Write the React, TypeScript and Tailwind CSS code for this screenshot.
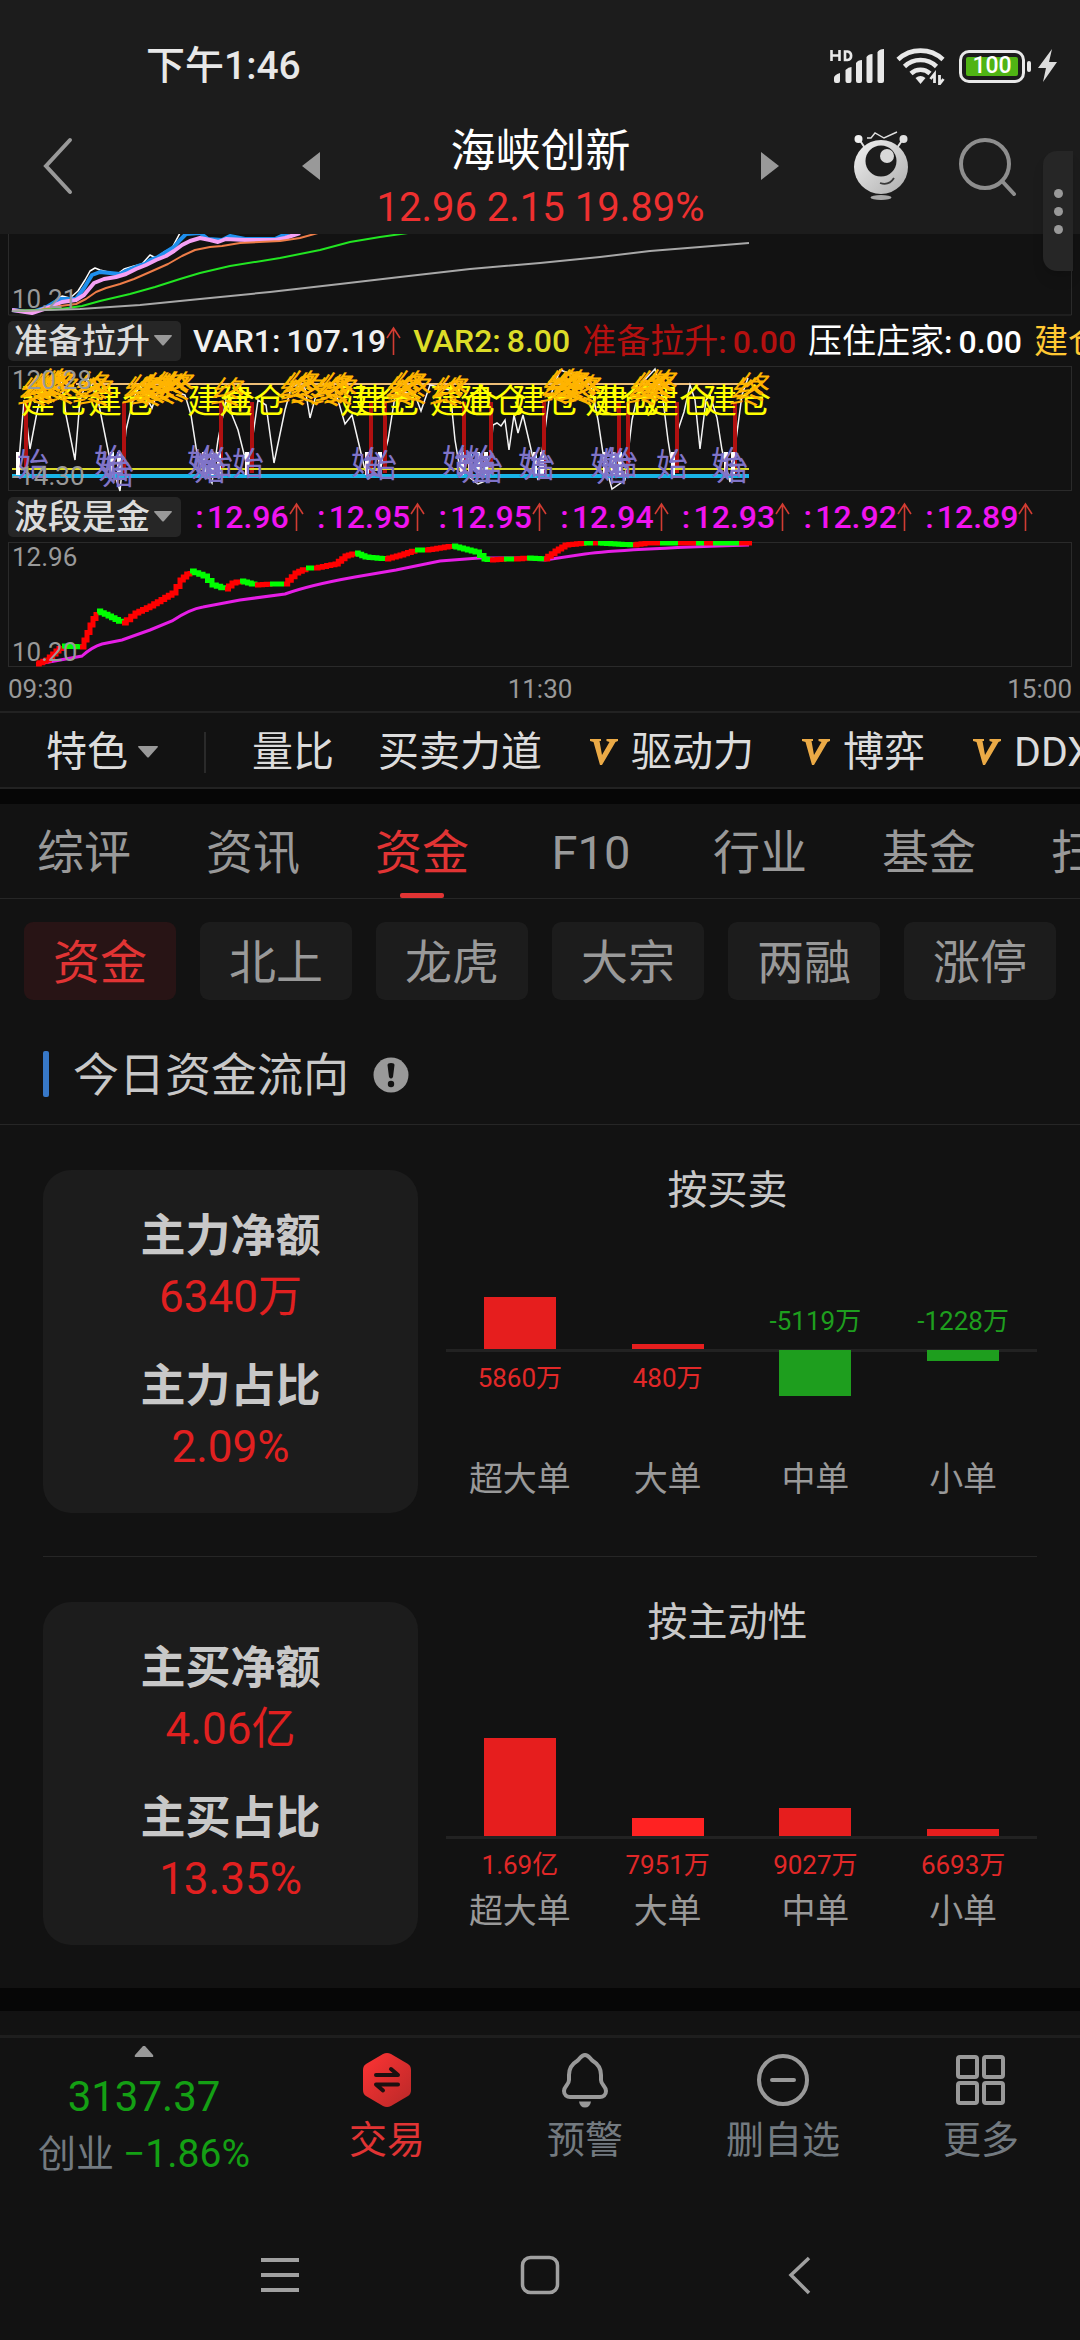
import { useState } from 'react'
import type { ReactNode } from 'react'

type Point = [number, number]

interface Bar {
  name: string
  value: string
  height: number
  negative?: boolean
  bright?: boolean
}

interface FlowPanel {
  title: string
  amountLabel: string
  amount: string
  ratioLabel: string
  ratio: string
  // room above the axis depends on whether the panel has outflows
  tall?: boolean
  bars: Bar[]
}

const TABS = ['综评', '资讯', '资金', 'F10', '行业', '基金', '扫雷']
const SUB_TABS = ['资金', '北上', '龙虎', '大宗', '两融', '涨停']
const WAVE = ['12.96', '12.95', '12.95', '12.94', '12.93', '12.92', '12.89']

const PANELS: FlowPanel[] = [
  {
    title: '按买卖',
    amountLabel: '主力净额',
    amount: '6340万',
    ratioLabel: '主力占比',
    ratio: '2.09%',
    bars: [
      { name: '超大单', value: '5860万', height: 52 },
      { name: '大单', value: '480万', height: 5 },
      { name: '中单', value: '-5119万', height: 46, negative: true },
      { name: '小单', value: '-1228万', height: 11, negative: true },
    ],
  },
  {
    title: '按主动性',
    amountLabel: '主买净额',
    amount: '4.06亿',
    ratioLabel: '主买占比',
    ratio: '13.35%',
    tall: true,
    bars: [
      { name: '超大单', value: '1.69亿', height: 98 },
      { name: '大单', value: '7951万', height: 18, bright: true },
      { name: '中单', value: '9027万', height: 28 },
      { name: '小单', value: '6693万', height: 7 },
    ],
  },
]

function StatusBar() {
  return (
    <div className="flex h-[92px] items-center justify-between pt-[40px] pr-[22px] pl-[146px]">
      <span className="text-[39px] leading-[52px] font-medium text-[#e8e8e8]">下午1:46</span>
      <div className="flex items-center">
        <svg width="56" height="36" viewBox="0 0 56 36" fill="#e8e8e8" aria-label="信号">
          <path d="M1.500 2v11M9.500 2v11M1.500 7.500h8M15 3.500v8.500h2.500a4.300 4.300 0 0 0 0-8.500z" fill="none" stroke="#e8e8e8" strokeWidth="2.600" />
          <path d="M4 30q0-3 6-5v8q0 2-2 2H6q-2 0-2-2zM15.500 22q3-3 6-3v14q0 2-2 2h-2q-2 0-2-2zM26 15q2-3 6-3v21q0 2-2 2h-2q-2 0-2-2zM36.500 9q2-3 6-3v27q0 2-2 2h-2q-2 0-2-2zM47.500 4q2-3 6.500-3v32q0 2-2 2h-2.500q-2 0-2-2z" />
        </svg>
        <svg className="ml-[10px]" width="50" height="38" viewBox="0 0 50 38" fill="none" stroke="#e8e8e8" strokeWidth="4.600" aria-label="无线网络">
          <path d="M2 12.500a33 33 0 0 1 45 0M8.500 19.500a23 23 0 0 1 32 0M15 26.500a14 14 0 0 1 19 0" />
          <path d="M19.500 31q5-4 10 0l-5 6z" fill="#e8e8e8" stroke="none" />
          <path d="M38.500 36V27l-4 5M43.500 28v9l4-5" strokeWidth="2.800" />
        </svg>
        <div className="ml-[13px] flex h-[33px] w-[66px] rounded-[10px] border-[3px] border-[#e8e8e8] p-[4px]">
          <span className="flex flex-1 items-center justify-center rounded-[2px] bg-[#50b414] text-[23px] leading-[20px] font-medium text-white">
            100
          </span>
        </div>
        <span className="ml-[2px] h-[11px] w-[4px] rounded-[2px] bg-[#e8e8e8]" />
        <svg className="ml-[7px]" width="20" height="34" viewBox="0 0 20 34" fill="#dcdcdc" aria-label="充电中">
          <path d="M14 0L0 19h8L5 33 19 13h-8z" />
        </svg>
      </div>
    </div>
  )
}

function Robot() {
  return (
    <svg width="56" height="70" viewBox="0 0 56 70" fill="none">
      <defs>
        <linearGradient id="robot" x1="0" y1="0" x2="1" y2="1">
          <stop offset="0" stopColor="#f2f2f2" />
          <stop offset="1" stopColor="#adadad" />
        </linearGradient>
      </defs>
      <path d="M6 8l6 9M50 8l-6 9" stroke="#e0e0e0" strokeWidth="2" />
      <circle cx="5.500" cy="8" r="4" fill="#f0f0f0" />
      <circle cx="50.500" cy="8" r="4" fill="#e0e0e0" />
      <path d="M14 7h4l4-5 9 5 13-6" stroke="#e0e0e0" strokeWidth="1.400" />
      <circle cx="28" cy="36" r="27" fill="url(#robot)" />
      <circle cx="28" cy="30" r="15.500" fill="#1c1c1c" />
      <circle cx="34" cy="25" r="7" fill="#d8d8d8" />
      <path d="M27 52q9 3 14-5" stroke="#3a3a3a" strokeWidth="1.800" />
      <ellipse cx="28" cy="66.500" rx="10.500" ry="2.500" fill="#a8a8a8" />
    </svg>
  )
}

function Header() {
  return (
    <header className="flex h-[142px] items-center pt-[6px] pr-[62px] pl-[36px]">
      <button aria-label="返回" className="flex-none">
        <svg width="44" height="60" viewBox="0 0 44 60" fill="none" stroke="#999" strokeWidth="4" strokeLinecap="round">
          <path d="M34 4L10 30l24 26" />
        </svg>
      </button>
      <div className="flex flex-1 items-center justify-between pr-[74px] pl-[222px]">
        <button aria-label="上一只">
          <svg width="18" height="28" viewBox="0 0 18 28" fill="#999"><path d="M18 0v28L0 14z" /></svg>
        </button>
        <div className="flex flex-col items-center pt-[28px]">
          <h1 className="text-[45px] leading-[56px] text-white">海峡创新</h1>
          <p className="text-[40px] leading-[56px] whitespace-nowrap text-[#ee3030]">12.96 2.15 19.89%</p>
        </div>
        <button aria-label="下一只">
          <svg width="18" height="28" viewBox="0 0 18 28" fill="#999"><path d="M0 0v28l18-14z" /></svg>
        </button>
      </div>
      <div className="flex flex-none items-center gap-[49px]">
        <button aria-label="智能助手"><Robot /></button>
        <button aria-label="搜索">
          <svg width="60" height="60" viewBox="0 0 60 60" fill="none" stroke="#8e8e8e" strokeWidth="4" strokeLinecap="round">
            <circle cx="27" cy="28" r="24" />
            <path d="M44 45l12 13" />
          </svg>
        </button>
      </div>
    </header>
  )
}

function line(points: Point[]) {
  return points.map((p) => p.join(',')).join(' ')
}

const AVERAGES: { color: string; width: number; points: Point[] }[] = [
  {
    color: '#ffffff',
    width: 1.5,
    points: [[12, 310], [18, 311], [32, 313], [44, 309], [56, 300], [62, 296], [70, 298], [78, 291], [85, 280], [90, 271], [95, 268], [100, 270], [108, 272], [116, 275], [124, 269], [134, 266], [142, 264], [150, 255], [156, 258], [164, 252], [172, 248], [180, 233]],
  },
  {
    color: '#1e8fee',
    width: 4,
    points: [[12, 310], [32, 312], [45, 308], [60, 299], [76, 299], [84, 288], [92, 275], [100, 272], [110, 273], [120, 274], [128, 270], [138, 266], [145, 264], [150, 260], [158, 257], [166, 252], [174, 247], [180, 240], [186, 234], [200, 233], [208, 239], [222, 240], [230, 236], [245, 239], [275, 239], [290, 232]],
  },
  {
    color: '#f5a0f5',
    width: 4,
    points: [[12, 310], [32, 313], [50, 307], [62, 302], [76, 300], [84, 295], [94, 283], [104, 279], [116, 277], [126, 274], [136, 269], [146, 265], [156, 260], [166, 256], [174, 251], [182, 245], [190, 241], [200, 238], [210, 240], [218, 242], [226, 239], [245, 240], [275, 240], [285, 238], [300, 233]],
  },
  {
    color: '#ee7d48',
    width: 2,
    points: [[12, 311], [40, 310], [60, 306], [76, 304], [86, 299], [96, 292], [106, 288], [120, 284], [134, 279], [150, 272], [168, 264], [182, 256], [195, 250], [210, 247], [222, 246], [240, 243], [280, 241], [300, 238], [318, 233]],
  },
  {
    color: '#22e622',
    width: 2,
    points: [[12, 311], [60, 309], [82, 306], [100, 301], [130, 294], [155, 287], [180, 279], [200, 273], [230, 266], [280, 258], [320, 250], [350, 242], [380, 237], [408, 233]],
  },
  {
    color: '#a8a8a8',
    width: 2,
    points: [[12, 311], [80, 309], [140, 305], [200, 299], [270, 292], [340, 284], [400, 277], [470, 269], [540, 263], [600, 257], [650, 251], [700, 247], [749, 243]],
  },
]

function AverageChart() {
  return (
    <svg className="block w-full" viewBox="8 234 1064 82" fill="none">
      <path d="M8.500 234V315H1071.500V234" stroke="#2a2a2a" />
      {AVERAGES.map((a) => (
        <polyline key={a.color} points={line(a.points)} stroke={a.color} strokeWidth={a.width} strokeLinejoin="round" />
      ))}
      <text x="12" y="308" fontSize="26" fill="#999">10.21</text>
    </svg>
  )
}

const OSCILLATOR: Point[] = [
  [18, 472], [24, 400], [30, 449], [37, 412], [44, 385], [60, 372], [66, 415], [75, 460], [80, 400], [88, 378], [98, 400], [110, 460], [120, 491],
  [126, 430], [133, 400], [140, 385], [152, 408], [160, 385], [185, 395], [191, 415], [198, 460], [212, 483], [218, 440], [226, 400], [238, 430],
  [248, 470], [258, 400], [266, 405], [274, 463], [285, 410], [292, 385], [305, 388], [310, 418], [316, 395], [335, 390], [345, 424], [352, 415],
  [365, 470], [380, 470], [388, 440], [396, 390], [415, 395], [421, 411], [430, 385], [450, 390], [455, 440], [460, 470], [478, 484], [488, 480],
  [493, 425], [497, 423], [501, 426], [505, 420], [509, 450], [514, 415], [518, 433], [523, 415], [530, 445], [538, 480], [545, 430], [549, 400],
  [560, 370], [590, 380], [598, 420], [604, 460], [612, 489], [625, 480], [632, 420], [640, 385], [655, 369], [663, 400], [668, 440], [673, 472],
  [678, 430], [684, 412], [690, 385], [695, 400], [700, 449], [706, 400], [710, 395], [717, 418], [722, 450], [730, 482], [736, 440], [742, 395], [748, 378],
]
const SIGNALS = [26, 124, 221, 252, 371, 385, 464, 491, 544, 619, 628, 677, 735]
const BUILD = [21, 88, 187, 219, 340, 354, 430, 459, 512, 585, 594, 645, 703]
const HATCH = [18, 112, 119, 204, 212, 219, 247, 367, 380, 462, 470, 478, 486, 535, 542, 605, 613, 620, 673, 726, 733]
const STARTS: Point[] = [
  [17, 476], [94, 472], [98, 478], [102, 484], [187, 472], [191, 476], [194, 480], [201, 474], [232, 475], [351, 474], [365, 477],
  [442, 472], [456, 475], [461, 480], [465, 472], [471, 480], [518, 474], [523, 477], [590, 474], [596, 481], [600, 475], [606, 474],
  [656, 476], [711, 474], [716, 480],
]
const ENDS: Point[] = [
  [17, 404], [22, 402], [27, 400], [32, 397], [36, 395], [40, 397], [44, 402], [72, 402], [75, 398], [79, 404],
  [121, 403], [126, 401], [131, 404], [136, 401], [141, 399], [146, 402], [150, 398], [155, 400], [160, 398],
  [210, 404], [276, 403], [280, 399], [285, 397], [290, 403], [310, 404], [314, 401], [319, 399], [323, 403],
  [383, 403], [387, 399], [392, 397], [397, 402], [429, 404], [434, 402],
  [539, 402], [543, 397], [547, 395], [551, 398], [555, 396], [559, 400], [563, 403], [567, 401],
  [626, 403], [630, 399], [635, 397], [640, 400], [643, 396], [729, 404], [735, 399],
]

function SignalChart() {
  return (
    <svg className="block w-full" viewBox="8 366 1064 126" fill="none">
      <rect x="8.500" y="366.500" width="1063" height="124" stroke="#2a2a2a" />
      <path d="M76 384H749" stroke="#edbe78" strokeWidth="2" />
      <polyline points={line(OSCILLATOR)} stroke="#f4f4f4" strokeWidth="1.500" />
      {SIGNALS.map((x) => (
        <path key={x} d={`M${x} 402V473`} stroke="#b01010" strokeWidth="4" />
      ))}
      <path d="M12 469H749" stroke="#dcdc28" strokeWidth="2" />
      <path d="M12 476H749" stroke="#18b4e6" strokeWidth="4" />
      {HATCH.map((x) => (
        <path key={x} d={`M${x} 452V475`} stroke="#fff" strokeWidth="4" />
      ))}
      <g fontSize="34" fill="#ffff00">
        {BUILD.map((x) => <text key={x} x={x} y="413">建仓</text>)}
      </g>
      <g fontSize="32" fill="#8074c8">
        {STARTS.map(([x, y]) => <text key={x} x={x} y={y}>始</text>)}
      </g>
      <g fontSize="32" fontStyle="italic" fill="#ffb400">
        {ENDS.map(([x, y]) => <text key={x} x={x} y={y}>终</text>)}
      </g>
      <g fontSize="26" fill="#999">
        <text x="12" y="389">120.28</text>
        <text x="12" y="485">-14.30</text>
      </g>
    </svg>
  )
}

// direction changes of the wave line, in time order
const WAVE_RUNS: { up: boolean; points: Point[] }[] = [
  { up: true, points: [[36, 664], [46, 660], [56, 651], [62, 646]] },
  { up: false, points: [[62, 646], [80, 647]] },
  { up: true, points: [[80, 647], [84, 640], [90, 625], [96, 612]] },
  { up: false, points: [[97, 611], [108, 616], [122, 623]] },
  { up: true, points: [[122, 623], [135, 613], [150, 606], [172, 593], [180, 580], [190, 571]] },
  { up: false, points: [[190, 571], [203, 576], [212, 585], [225, 589]] },
  { up: true, points: [[225, 589], [232, 583], [240, 581]] },
  { up: false, points: [[240, 581], [255, 585]] },
  { up: true, points: [[255, 585], [270, 584]] },
  { up: false, points: [[270, 584], [284, 584]] },
  { up: true, points: [[284, 584], [295, 573], [306, 568]] },
  { up: false, points: [[306, 568], [314, 568]] },
  { up: true, points: [[314, 568], [335, 564], [345, 556], [355, 553]] },
  { up: false, points: [[355, 553], [365, 557], [385, 559]] },
  { up: true, points: [[385, 559], [400, 555], [415, 550]] },
  { up: false, points: [[415, 550], [425, 550]] },
  { up: true, points: [[425, 550], [452, 546]] },
  { up: false, points: [[452, 546], [475, 552], [484, 559], [490, 560]] },
  { up: true, points: [[490, 560], [504, 559]] },
  { up: false, points: [[504, 559], [514, 559]] },
  { up: true, points: [[514, 559], [527, 558]] },
  { up: false, points: [[527, 558], [544, 559]] },
  { up: true, points: [[544, 559], [555, 551], [565, 545], [584, 543]] },
  { up: false, points: [[584, 543], [593, 543]] },
  { up: true, points: [[593, 543], [598, 543]] },
  { up: false, points: [[598, 543], [615, 544], [633, 545]] },
  { up: true, points: [[633, 545], [645, 543], [660, 543]] },
  { up: false, points: [[660, 543], [678, 543]] },
  { up: true, points: [[678, 543], [696, 543]] },
  { up: false, points: [[696, 543], [704, 543]] },
  { up: true, points: [[704, 543], [713, 543]] },
  { up: false, points: [[713, 543], [739, 543]] },
  { up: true, points: [[739, 543], [752, 543]] },
]

function stairs(points: Point[]) {
  let d = `M${points[0][0]} ${points[0][1]}`
  for (let i = 1; i < points.length; i++) {
    const [x0, y0] = points[i - 1]
    const [x1, y1] = points[i]
    const steps = Math.max(1, Math.round((x1 - x0) / 4))
    for (let s = 1; s <= steps; s++) {
      d += `H${(x0 + ((x1 - x0) * s) / steps).toFixed(1)}V${(y0 + ((y1 - y0) * s) / steps).toFixed(1)}`
    }
  }
  return d
}

function WaveChart() {
  return (
    <svg className="block w-full" viewBox="8 541 1064 126" fill="none">
      <rect x="8.500" y="542.500" width="1063" height="124" stroke="#2a2a2a" />
      <path
        d="M38 664L82 656Q92 647 102 644L122 640 150 630 172 621Q190 609 203 607L240 600 285 594Q310 585 355 577L396 570 440 561 479 558H520L545 560 585 554Q620 549 749 545"
        stroke="#e61ee6"
        strokeWidth="3"
      />
      {WAVE_RUNS.map((run) => (
        <path key={run.points[0].join()} d={stairs(run.points)} stroke={run.up ? '#ff0000' : '#00ff00'} strokeWidth="5" />
      ))}
      <g fontSize="26" fill="#999">
        <text x="12" y="566">12.96</text>
        <text x="12" y="661">10.20</text>
      </g>
    </svg>
  )
}

function UpArrow() {
  return (
    <svg width="15" height="30" viewBox="0 0 15 30" fill="none" stroke="#d23c32" strokeWidth="1.600">
      <path d="M7.500 29V2M1 12L7.500 2 14 12" />
    </svg>
  )
}

function IndicatorButton({ children }: { children: ReactNode }) {
  return (
    <button className="flex h-[40px] flex-none items-center gap-[4px] rounded-[5px] bg-[#262626] pr-[9px] pl-[6px] text-[34px] leading-[40px] whitespace-nowrap text-[#dcdcdc]">
      {children}
      <svg width="18" height="12" viewBox="0 0 18 12" fill="#999"><path d="M1 0h16q2 0 0 2l-7 8q-1 1-2 0L1 2Q-1 0 1 0z" /></svg>
    </button>
  )
}

function Charts() {
  return (
    <section className="px-[8px]">
      <AverageChart />
      <div className="-mr-[8px] flex h-[50px] items-center gap-[12px] overflow-hidden text-[32px] leading-[40px] font-medium whitespace-nowrap">
        <IndicatorButton>准备拉升</IndicatorButton>
        <div className="flex items-center text-[#f0f0f0]">VAR1:<span className="ml-[6px]">107.19</span><UpArrow /></div>
        <div className="text-[#dcdc28]">VAR2:<span className="ml-[6px]">8.00</span></div>
        <div className="text-[#b41010]"><span className="text-[34px] font-normal">准备拉升</span>:<span className="ml-[6px]">0.00</span></div>
        <div className="text-white"><span className="text-[34px] font-normal">压住庄家</span>:<span className="ml-[6px]">0.00</span></div>
        <span className="text-[34px] font-normal text-[#ffc832]">建仓</span>
      </div>
      <SignalChart />
      <div className="flex h-[49px] items-center gap-[11px] overflow-hidden text-[32px] leading-[40px] font-medium whitespace-nowrap">
        <IndicatorButton>波段是金</IndicatorButton>
        <div className="flex items-center gap-[10px]">
          {WAVE.map((value, i) => (
            <div key={i} className="flex items-center text-[#f014f0]">
              <span className="w-[15px] text-center">:</span>
              {value}
              <UpArrow />
            </div>
          ))}
        </div>
      </div>
      <WaveChart />
      <div className="flex h-[44px] items-center justify-between text-[26px] leading-[40px] text-[#999]">
        <span>09:30</span>
        <span>11:30</span>
        <span>15:00</span>
      </div>
    </section>
  )
}

function Vip({ children }: { children: ReactNode }) {
  return (
    <button className="flex flex-none items-center gap-[13px]">
      <svg width="28" height="26" viewBox="0 0 28 26" fill="#ebaa46">
        <path d="M0 0h11v2H9.500l2.500 14L19.500 3l-3-1V0H28v2l-2.500 1L12 26h-2L3.500 3 0 2z" />
      </svg>
      {children}
    </button>
  )
}

function FeatureBar() {
  return (
    <div className="flex h-[78px] items-center overflow-hidden border-y-2 border-[#222] pt-[4px] pl-[46px] text-[41px] leading-[48px] whitespace-nowrap text-[#dcdcdc]">
      <button className="flex flex-none items-center gap-[10px]">
        特色
        <svg width="20" height="13" viewBox="0 0 20 13" fill="#999"><path d="M1 0h18q2 0 0 2l-8 9q-1 1-2 0L1 2Q-1 0 1 0z" /></svg>
      </button>
      <span className="mx-[46px] h-[41px] w-[2px] flex-none bg-[#2a2a2a]" />
      <div className="flex flex-none items-center gap-[48px]">
        <div className="flex gap-[44px]">
          <button>量比</button>
          <button>买卖力道</button>
        </div>
        <Vip>驱动力</Vip>
        <Vip>博弈</Vip>
        <Vip>DDX</Vip>
      </div>
    </div>
  )
}

function Tabs() {
  const [tab, setTab] = useState('资金')
  return (
    <nav className="flex h-[95px] gap-[75px] overflow-hidden border-b border-[#262626] pl-[37px]">
      {TABS.map((name) => (
        <button
          key={name}
          onClick={() => setTab(name)}
          className={`relative min-w-[94px] flex-none pt-[4px] text-center text-[47px] leading-[90px] whitespace-nowrap ${tab === name ? 'text-[#e13434]' : 'text-[#999]'}`}
        >
          {name}
          {tab === name && <span className="absolute bottom-0 left-1/2 h-[5px] w-[44px] -translate-x-1/2 rounded-[2px] bg-[#e13434]" />}
        </button>
      ))}
    </nav>
  )
}

function SubTabs() {
  const [active, setActive] = useState('资金')
  return (
    <div className="flex gap-[24px] px-[24px] pt-[23px]">
      {SUB_TABS.map((name) => (
        <button
          key={name}
          onClick={() => setActive(name)}
          className={`h-[78px] flex-1 rounded-[9px] pt-[4px] text-[47px] leading-[74px] ${active === name ? 'bg-[#281415] text-[#e13434]' : 'bg-[#1c1c1c] text-[#999]'}`}
        >
          {name}
        </button>
      ))}
    </div>
  )
}

function BarColumn({ bar, tall }: { bar: Bar; tall?: boolean }) {
  const color = bar.negative ? 'bg-[#1e9e1e]' : bar.bright ? 'bg-[#ff2222]' : 'bg-[#e61e1e]'
  const block = <div className={`w-[72px] ${color}`} style={{ height: bar.height }} />
  return (
    <div className="flex flex-1 flex-col items-center text-[26px] leading-[30px] whitespace-nowrap">
      <div className={`flex flex-col items-center justify-end ${tall ? 'h-[192px]' : 'h-[137px]'}`}>
        {bar.negative ? <span className="mb-[13px] text-[#1e9e1e]">{bar.value}</span> : block}
      </div>
      <div className={`flex w-full flex-col items-center border-t-[3px] border-[#222] ${tall ? 'h-[55px]' : 'h-[110px]'}`}>
        {bar.negative ? <div className="-mt-[2px]">{block}</div> : <span className="mt-[11px] text-[#e12828]">{bar.value}</span>}
      </div>
      <span className="text-[34px] leading-[40px] text-[#999]">{bar.name}</span>
    </div>
  )
}

function Flow({ panel }: { panel: FlowPanel }) {
  return (
    <div className="flex items-start pt-[45px] pb-[43px]">
      <div className="flex h-[343px] w-[375px] flex-none flex-col items-center rounded-[28px] bg-[#1c1c1c] pt-[37px] text-[44px] leading-[60px] text-[#e12020]">
        <h3 className="text-[45px] font-bold text-[#c8c8c8]">{panel.amountLabel}</h3>
        <p>{panel.amount}</p>
        <h3 className="mt-[30px] text-[45px] font-bold text-[#c8c8c8]">{panel.ratioLabel}</h3>
        <p>{panel.ratio}</p>
      </div>
      <div className="flex-1">
        <h3 className="text-center text-[40px] leading-[42px] text-[#c8c8c8]">{panel.title}</h3>
        <div className="flex pl-[28px]">
          {panel.bars.map((bar) => <BarColumn key={bar.name} bar={bar} tall={panel.tall} />)}
        </div>
      </div>
    </div>
  )
}

function FundFlow() {
  return (
    <section>
      <div className="mt-[24px] flex h-[101px] items-center border-b border-[#262626] pl-[43px]">
        <span className="h-[46px] w-[6px] rounded-[2px] bg-[#3778c8]" />
        <h2 className="ml-[24px] pt-[2px] text-[46px] leading-[56px] text-[#c8c8c8]">今日资金流向</h2>
        <button aria-label="说明" className="ml-[24px] pt-[2px]">
          <svg width="36" height="36" viewBox="0 0 36 36">
            <circle cx="18" cy="18" r="17.500" fill="#999" />
            <path d="M14.500 8q0-2 3.500-2t3.500 2l-1.500 12q-2 3-4 0z" fill="#121212" />
            <circle cx="18" cy="27" r="3.200" fill="#121212" />
          </svg>
        </button>
      </div>
      <div className="divide-y divide-[#262626] px-[43px]">
        {PANELS.map((panel) => <Flow key={panel.title} panel={panel} />)}
      </div>
    </section>
  )
}

function Action({ label, active, children }: { label: string; active?: boolean; children: ReactNode }) {
  return (
    <button className={`flex flex-1 flex-col items-center gap-[8px] pt-[14px] text-[38px] leading-[48px] ${active ? 'text-[#e13434]' : 'text-[#737a80]'}`}>
      <svg width="56" height="56" viewBox="0 0 56 56" fill="none" stroke="#999" strokeWidth="4" strokeLinecap="round" strokeLinejoin="round">
        {children}
      </svg>
      {label}
    </button>
  )
}

function BottomBar() {
  return (
    <footer className="flex h-[164px] border-t-[3px] border-[#1e1e1e]">
      <button className="flex w-[288px] flex-none flex-col items-center pt-[8px] whitespace-nowrap text-[#14a014]">
        <svg width="20" height="11" viewBox="0 0 20 11" fill="#999"><path d="M9 0h2l8 9q1 2-1 2H2q-2 0-1-2z" /></svg>
        <span className="mt-[12px] text-[42px] leading-[56px]">3137.37</span>
        <span className="flex items-center gap-[9px] text-[39px] leading-[58px]">
          <span className="text-[38px] text-[#737a80]">创业</span>−1.86%
        </span>
      </button>
      <Action label="交易" active>
        <defs>
          <linearGradient id="trade" x1="0" y1="0" x2="1" y2="1">
            <stop offset="0" stopColor="#ff3434" />
            <stop offset="1" stopColor="#b82828" />
          </linearGradient>
        </defs>
        <path d="M24 2q4-2 8 0l17 10q3 2 3 6v20q0 4-3 6L32 54q-4 2-8 0L7 44q-3-2-3-6V18q0-4 3-6z" fill="url(#trade)" stroke="none" />
        <path d="M17 23h22l-7-6M39 32.500H17l7 6" stroke="#1c1010" />
      </Action>
      <Action label="预警">
        <path d="M28 3c-4 0-5 4-8 6-5 3-8 8-8 14v5c0 5-5 6-5 11 0 4 3 6 6 6h30c3 0 6-2 6-6 0-5-5-6-5-11v-5c0-6-3-11-8-14-3-2-4-6-8-6z" />
        <path d="M22 49.500h12q-1 6-6 6t-6-6z" fill="#999" stroke="none" />
      </Action>
      <Action label="删自选">
        <circle cx="28" cy="28" r="24" />
        <path d="M17 28h22" />
      </Action>
      <Action label="更多">
        <rect x="5" y="5" width="19" height="20" rx="2" />
        <rect x="31" y="5" width="19" height="20" rx="2" />
        <rect x="5" y="31" width="19" height="20" rx="2" />
        <rect x="31" y="31" width="19" height="20" rx="2" />
      </Action>
    </footer>
  )
}

function SystemNav() {
  return (
    <div className="flex flex-1 items-start justify-center gap-[220px] pt-[56px]">
      <button aria-label="最近任务">
        <svg width="40" height="40" viewBox="0 0 40 40" stroke="#a0a0a0" strokeWidth="4"><path d="M1 5h38M1 20h38M1 35h38" /></svg>
      </button>
      <button aria-label="主屏幕">
        <svg width="40" height="40" viewBox="0 0 40 40" fill="none" stroke="#a0a0a0" strokeWidth="3.500"><rect x="2.500" y="2.500" width="35" height="35" rx="8" /></svg>
      </button>
      <button aria-label="后退">
        <svg width="40" height="40" viewBox="0 0 40 40" fill="none" stroke="#a0a0a0" strokeWidth="3.500"><path d="M29 3L11 20l18 18" /></svg>
      </button>
    </div>
  )
}

export default function App() {
  return (
    <div className="relative flex min-h-screen flex-col overflow-hidden bg-[#121212] font-['Roboto','Noto_Sans_CJK_SC',sans-serif]">
      <div className="bg-[#1c1c1c]">
        <StatusBar />
        <Header />
      </div>
      <Charts />
      <FeatureBar />
      <div className="h-[15px] bg-[#060606]" />
      <Tabs />
      <SubTabs />
      <FundFlow />
      <div className="mb-[24px] h-[23px] bg-[#060606]" />
      <BottomBar />
      <SystemNav />
      <button
        aria-label="侧边栏"
        className="absolute top-[151px] right-[7px] flex h-[120px] w-[30px] flex-col items-center justify-center gap-[9px] rounded-l-[14px] bg-[#262626] shadow-lg"
      >
        <span className="h-[9px] w-[9px] rounded-full bg-[#999]" />
        <span className="h-[9px] w-[9px] rounded-full bg-[#999]" />
        <span className="h-[9px] w-[9px] rounded-full bg-[#999]" />
      </button>
    </div>
  )
}
